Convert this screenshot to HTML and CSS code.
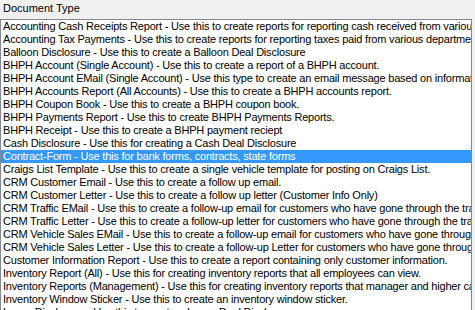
FILE: index.html
```html
<!DOCTYPE html>
<html lang="en">
<head>
  <meta charset="UTF-8">
  <title>Document Type</title>
  <link rel="stylesheet" href="styles.css">
</head>
<body>

<div class="field-label">Document Type</div>
<div class="listbox">
  <ul class="doc-list">
    <li>Accounting Cash Receipts Report - Use this to create reports for reporting cash received from various departments.</li>
    <li>Accounting Tax Payments - Use this to create reports for reporting taxes paid from various departments.</li>
    <li>Balloon Disclosure - Use this to create a Balloon Deal Disclosure</li>
    <li>BHPH Account (Single Account) - Use this to create a report of a BHPH account.</li>
    <li>BHPH Account EMail (Single Account) - Use this type to create an email message based on information in a BHPH account.</li>
    <li>BHPH Accounts Report (All Accounts) - Use this to create a BHPH accounts report.</li>
    <li>BHPH Coupon Book - Use this to create a BHPH coupon book.</li>
    <li>BHPH Payments Report - Use this to create BHPH Payments Reports.</li>
    <li>BHPH Receipt - Use this to create a BHPH payment reciept</li>
    <li>Cash Disclosure - Use this for creating a Cash Deal Disclosure</li>
    <li class="selected">Contract-Form - Use this for bank forms, contracts, state forms</li>
    <li>Craigs List Template - Use this to create a single vehicle template for posting on Craigs List.</li>
    <li>CRM Customer Email - Use this to create a follow up email.</li>
    <li>CRM Customer Letter - Use this to create a follow up letter (Customer Info Only)</li>
    <li>CRM Traffic EMail - Use this to create a follow-up email for customers who have gone through the traffic log.</li>
    <li>CRM Traffic Letter - Use this to create a follow-up letter for customers who have gone through the traffic log.</li>
    <li>CRM Vehicle Sales EMail - Use this to create a follow-up email for customers who have gone through a sale.</li>
    <li>CRM Vehicle Sales Letter - Use this to create a follow-up Letter for customers who have gone through a sale.</li>
    <li>Customer Information Report - Use this to create a report containing only customer information.</li>
    <li>Inventory Report (All) - Use this for creating inventory reports that all employees can view.</li>
    <li>Inventory Reports (Management) - Use this for creating inventory reports that manager and higher can view.</li>
    <li>Inventory Window Sticker - Use this to create an inventory window sticker.</li>
    <li>Lease Disclosure - Use this to create a Lease Deal Disclosure</li>
  </ul>
</div>

</body>
</html>
```

FILE: styles.css
```css
body {
  margin: 0;
  background-color: #f0f0f0;
  font-family: "Liberation Sans", Arial, sans-serif;
  font-size: 11px;
  letter-spacing: -0.2px;
  color: #000;
  overflow: hidden;
}
.field-label {
  height: 19px;
  line-height: 17px;
  padding-left: 3px;
  letter-spacing: 0;
}
.listbox {
  width: 470px;
  height: 320px;
  background-color: white;
  border: 1px solid #828790;
  overflow: hidden;
}
.doc-list {
  list-style: none;
  margin: 0;
  padding: 0;
}
.doc-list li {
  height: 13px;
  line-height: 13px;
  padding-left: 2px;
  white-space: nowrap;
  overflow: hidden;
}
.doc-list li.selected {
  background-color: #3399ff;
  color: white;
}
```
